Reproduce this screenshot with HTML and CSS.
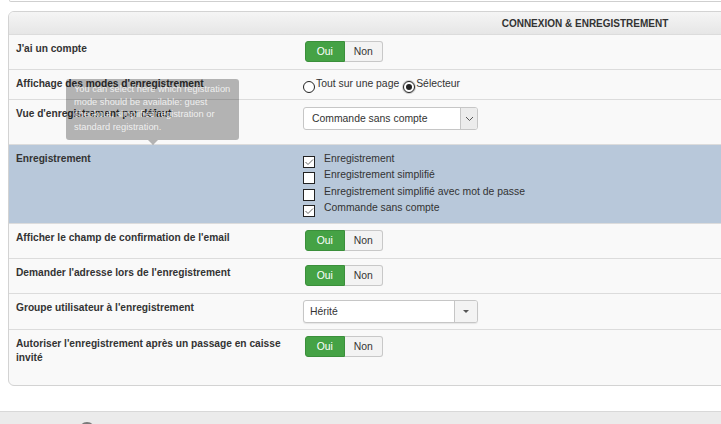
FILE: index.html
```html
<!DOCTYPE html>
<html lang="fr">
<head>
<meta charset="utf-8">
<title>Connexion &amp; Enregistrement</title>
<link rel="stylesheet" href="styles.css">
</head>
<body>
<div class="topbox"></div>
<div class="panel">
  <div class="panel-head">CONNEXION &amp; ENREGISTREMENT</div>

  <div class="row">
    <div class="label">J'ai un compte</div>
    <div class="ctrl">
      <div class="toggle"><span class="on">Oui</span><span class="off">Non</span></div>
    </div>
  </div>

  <div class="row">
    <div class="label">Affichage des modes d'enregistrement</div>
    <div class="ctrl radios">
      <span class="radio"></span><span class="rtext">Tout sur une page</span>
      <span class="radio checked"></span><span class="rtext">Sélecteur</span>
    </div>
    <div class="tooltip">You can select here which registration mode should be available: guest checkout, simplified registration or standard registration.</div>
  </div>

  <div class="row">
    <div class="label">Vue d'enregistrement par défaut</div>
    <div class="ctrl">
      <div class="select select-plain">
        <span class="select-text">Commande sans compte</span>
        <span class="select-btn">
          <svg width="9" height="6" viewBox="0 0 9 6"><path d="M1 1 L4.5 4.5 L8 1" fill="none" stroke="#555" stroke-width="1"/></svg>
        </span>
      </div>
    </div>
  </div>

  <div class="row row-hl">
    <div class="label">Enregistrement</div>
    <div class="ctrl checks">
      <div class="check-item"><span class="cbox"><svg width="10" height="10" viewBox="0 0 10 10"><path d="M1.5 5 L4 7.5 L9 2.5" fill="none" stroke="#666" stroke-width="1"/></svg></span><span>Enregistrement</span></div>
      <div class="check-item"><span class="cbox"></span><span>Enregistrement simplifié</span></div>
      <div class="check-item"><span class="cbox"></span><span>Enregistrement simplifié avec mot de passe</span></div>
      <div class="check-item"><span class="cbox"><svg width="10" height="10" viewBox="0 0 10 10"><path d="M1.5 5 L4 7.5 L9 2.5" fill="none" stroke="#666" stroke-width="1"/></svg></span><span>Commande sans compte</span></div>
    </div>
  </div>

  <div class="row">
    <div class="label">Afficher le champ de confirmation de l'email</div>
    <div class="ctrl">
      <div class="toggle"><span class="on">Oui</span><span class="off">Non</span></div>
    </div>
  </div>

  <div class="row">
    <div class="label">Demander l'adresse lors de l'enregistrement</div>
    <div class="ctrl">
      <div class="toggle"><span class="on">Oui</span><span class="off">Non</span></div>
    </div>
  </div>

  <div class="row">
    <div class="label">Groupe utilisateur à l'enregistrement</div>
    <div class="ctrl">
      <div class="select select-chosen">
        <span class="select-text">Hérité</span>
        <span class="select-btn"><span class="caret"></span></span>
      </div>
    </div>
  </div>

  <div class="row row-last">
    <div class="label">Autoriser l'enregistrement après un passage en caisse invité</div>
    <div class="ctrl">
      <div class="toggle"><span class="on">Oui</span><span class="off">Non</span></div>
    </div>
  </div>
</div>
<div class="footer"><span class="footer-dot"></span></div>
</body>
</html>
```

FILE: styles.css
```css
html {
  overflow: hidden;
  background: #fff;
}
body {
  margin: 0;
  font-family: "Liberation Sans", Arial, sans-serif;
  color: #333;
  font-size: 10.4px;
}
.topbox {
  margin-left: 9px;
  width: 1200px;
  height: 1px;
  border: 1px solid #cfcfcf;
  border-top: 0;
  border-radius: 0 0 0 4px;
}
.panel {
  margin: 9px 0 0 8px;
  width: 1152px;
  border: 1px solid #d3d3d3;
  border-radius: 6px;
  background: #f9f9f9;
  position: relative;
}
.panel-head {
  height: 22px;
  line-height: 24px;
  text-align: center;
  font-weight: bold;
  font-size: 10px;
  color: #333;
  background: linear-gradient(#f5f5f5, #e6e6e6);
  border-radius: 5px 5px 0 0;
}
.row {
  display: grid;
  grid-template-columns: 287px 1fr;
  border-top: 1px solid #dcdcdc;
  padding: 6px 0 7px 7px;
  position: relative;
}
.row-hl {
  background: #b8c8da;
}
.row-last {
  padding-bottom: 20px;
}
.label {
  font-weight: bold;
  font-size: 10.2px;
  line-height: 14px;
  padding-top: 1px;
  padding-right: 10px;
  color: #333;
}
.toggle {
  display: flex;
  margin-left: 2px;
  height: 21px;
  width: 78px;
}
.toggle span {
  flex: 1;
  text-align: center;
  line-height: 19px;
  font-size: 10.4px;
  border: 1px solid #c8c8c8;
}
.toggle .on {
  background: #45a245;
  border-color: #3b8f3b;
  color: #fff;
  border-radius: 3px 0 0 3px;
}
.toggle .off {
  background: #f3f3f3;
  color: #333;
  border-left: 0;
  border-radius: 0 3px 3px 0;
}
.radios {
  display: flex;
  align-items: flex-start;
  height: 16px;
  line-height: 16px;
}
.radio {
  width: 10px;
  height: 10px;
  border: 1px solid #222;
  border-radius: 50%;
  background: #fff;
  margin-top: 5px;
  flex: none;
  position: relative;
}
.radio.checked {
  margin-left: 4px;
  box-shadow: 0 0 0 1px #ccc;
}
.radio.checked::after {
  content: "";
  position: absolute;
  left: 2px;
  top: 2px;
  width: 6px;
  height: 6px;
  border-radius: 50%;
  background: #222;
}
.rtext {
  margin-left: 1px;
}
.tooltip {
  position: absolute;
  left: 57px;
  top: 9px;
  width: 157px;
  padding: 4px 8px 7px 8px;
  background: rgba(0, 0, 0, 0.28);
  color: rgba(255, 255, 255, 0.8);
  font-size: 9.3px;
  line-height: 12.6px;
  border-radius: 3px;
  z-index: 2;
}
.tooltip::after {
  content: "";
  position: absolute;
  left: 82px;
  bottom: -5px;
  border-left: 5px solid transparent;
  border-right: 5px solid transparent;
  border-top: 5px solid rgba(0, 0, 0, 0.28);
}
.select {
  display: flex;
  width: 173px;
  height: 21px;
  border: 1px solid #c6c6c6;
  border-radius: 3px;
  background: #fff;
}
.select-plain {
  margin-top: 1px;
  margin-bottom: 7px;
}
.select-chosen {
  margin-bottom: -1px;
  box-shadow: 0 1px 1px rgba(0, 0, 0, 0.08);
}
.select-text {
  flex: 1;
  line-height: 21px;
  padding-left: 8px;
}
.select-chosen .select-text {
  padding-left: 6px;
}
.select-btn {
  display: flex;
  align-items: center;
  justify-content: center;
  border-left: 1px solid #c6c6c6;
  background: #ececec;
  border-radius: 0 2px 2px 0;
}
.select-plain .select-btn {
  width: 16px;
}
.select-chosen .select-btn {
  width: 22px;
  background: #f3f3f3;
}
.caret {
  width: 0;
  height: 0;
  border-left: 3px solid transparent;
  border-right: 3px solid transparent;
  border-top: 3px solid #555;
}
.checks {
  display: flex;
  flex-direction: column;
}
.check-item {
  display: flex;
  align-items: flex-start;
  height: 16.25px;
  line-height: 16px;
}
.cbox {
  width: 10px;
  height: 10px;
  margin-top: 5px;
  margin-right: 9px;
  border: 1px solid #222;
  background: #fff;
  display: flex;
  align-items: center;
  justify-content: center;
  flex: none;
}
.footer {
  margin-top: 25px;
  height: 40px;
  border-top: 1px solid #d8d8d8;
  background: #ebebeb;
  overflow: hidden;
}
.footer-dot {
  display: block;
  width: 16px;
  height: 16px;
  border-radius: 50%;
  background: #7a7a7a;
  margin: 10px 0 0 79px;
}
```
